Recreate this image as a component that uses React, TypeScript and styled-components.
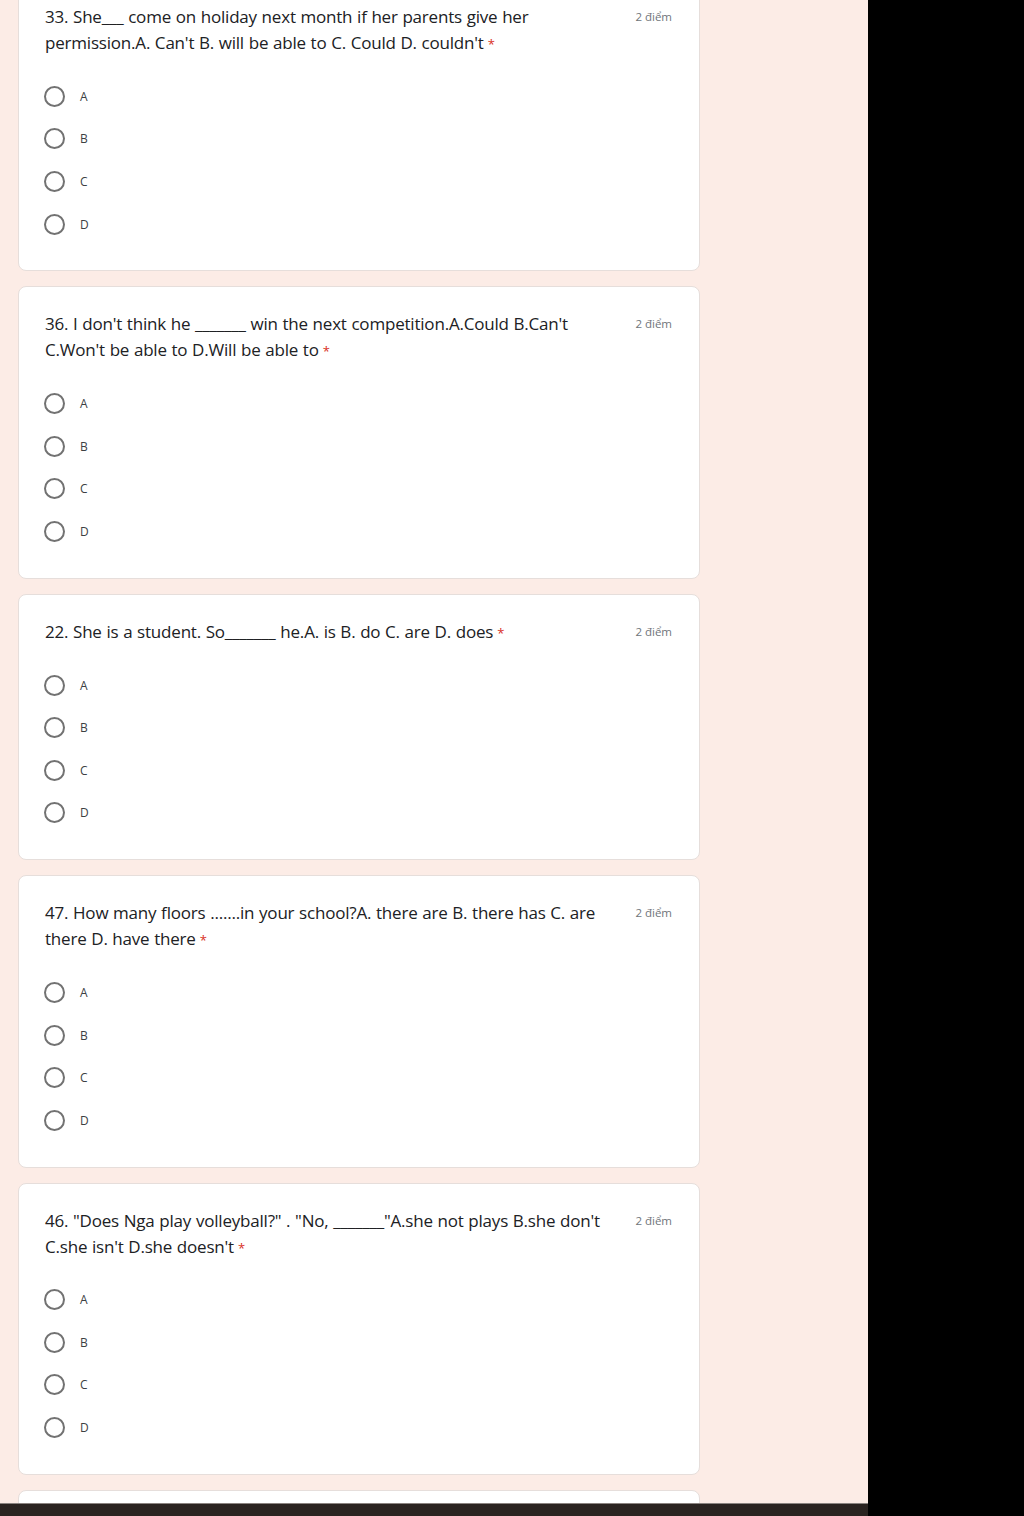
import styled, { createGlobalStyle } from 'styled-components';

const GlobalStyle = createGlobalStyle`
  html, body {
    margin: 0;
    padding: 0;
    background: #000;
  }
  body {
    font-family: "Open Sans", "Liberation Sans", sans-serif;
  }
`;

const Screen = styled.div`
  display: flex;
  width: 1024px;
  height: 1516px;
  overflow: hidden;
`;

const FormColumn = styled.div`
  width: 868px;
  display: flex;
  flex-direction: column;
  background: #fcece6;
`;

const Scroller = styled.div`
  flex: 1;
  overflow: hidden;
  padding-left: 18px;
`;

const CardList = styled.div`
  display: flex;
  flex-direction: column;
  gap: 15px;
  width: 682px;
  margin-top: -21px;
`;

const Card = styled.section<{ $stub?: boolean }>`
  background: #fff;
  border: 1px solid #e6dedb;
  border-radius: 8px;
  padding: 24px 26px 25px 26px;
  flex-shrink: 0;
  min-height: ${p => (p.$stub ? '120px' : 'auto')};
`;

const Header = styled.div`
  display: flex;
  align-items: flex-start;
  justify-content: space-between;
  gap: 16px;
`;

const Question = styled.div`
  font-size: 17px;
  line-height: 26px;
  letter-spacing: -0.2px;
  word-spacing: 0.5px;
  color: #202124;
`;

const Required = styled.span`
  color: #d93025;
  margin-left: 4px;
  font-size: 13px;
`;

const Points = styled.div`
  font-size: 11.5px;
  line-height: 26px;
  color: #70757a;
  letter-spacing: 0;
  padding-right: 1px;
  white-space: nowrap;
`;

const Options = styled.div`
  display: flex;
  flex-direction: column;
  margin-top: 18px;
`;

const Option = styled.label`
  display: flex;
  align-items: center;
  height: 42.6px;
  gap: 15px;
`;

const Radio = styled.span`
  box-sizing: border-box;
  width: 21px;
  height: 21px;
  border-radius: 50%;
  border: 2px solid #727272;
  margin-left: -1px;
`;

const OptionText = styled.span`
  font-size: 12px;
  color: #3c4043;
`;

const BottomBar = styled.div`
  height: 12px;
  background: #2a2320;
  border-top: 1px solid #8a8380;
  flex-shrink: 0;
`;

const Blackout = styled.div`
  flex: 1;
  background: #000;
`;

const questions: string[][] = [
  [
    '33. She___ come on holiday next month if her parents give her',
    "permission.A. Can't B. will be able to C. Could D. couldn't",
  ],
  [
    "36. I don't think he _______ win the next competition.A.Could B.Can't",
    "C.Won't be able to D.Will be able to",
  ],
  ['22. She is a student. So_______ he.A. is B. do C. are D. does'],
  [
    '47. How many floors .......in your school?A. there are B. there has C. are',
    'there D. have there',
  ],
  [
    '46. "Does Nga play volleyball?" . "No, _______"A.she not plays B.she don\'t',
    "C.she isn't D.she doesn't",
  ],
];

const choices = ['A', 'B', 'C', 'D'];

export default function App() {
  return (
    <Screen>
      <GlobalStyle />
      <FormColumn>
        <Scroller>
          <CardList>
            {questions.map((lines, i) => (
              <Card key={i}>
                <Header>
                  <Question>
                    {lines.map((line, j) => (
                      <div key={j}>
                        {line}
                        {j === lines.length - 1 && <Required>*</Required>}
                      </div>
                    ))}
                  </Question>
                  <Points>2 điểm</Points>
                </Header>
                <Options>
                  {choices.map(c => (
                    <Option key={c}>
                      <Radio />
                      <OptionText>{c}</OptionText>
                    </Option>
                  ))}
                </Options>
              </Card>
            ))}
            <Card $stub />
          </CardList>
        </Scroller>
        <BottomBar />
      </FormColumn>
      <Blackout />
    </Screen>
  );
}
